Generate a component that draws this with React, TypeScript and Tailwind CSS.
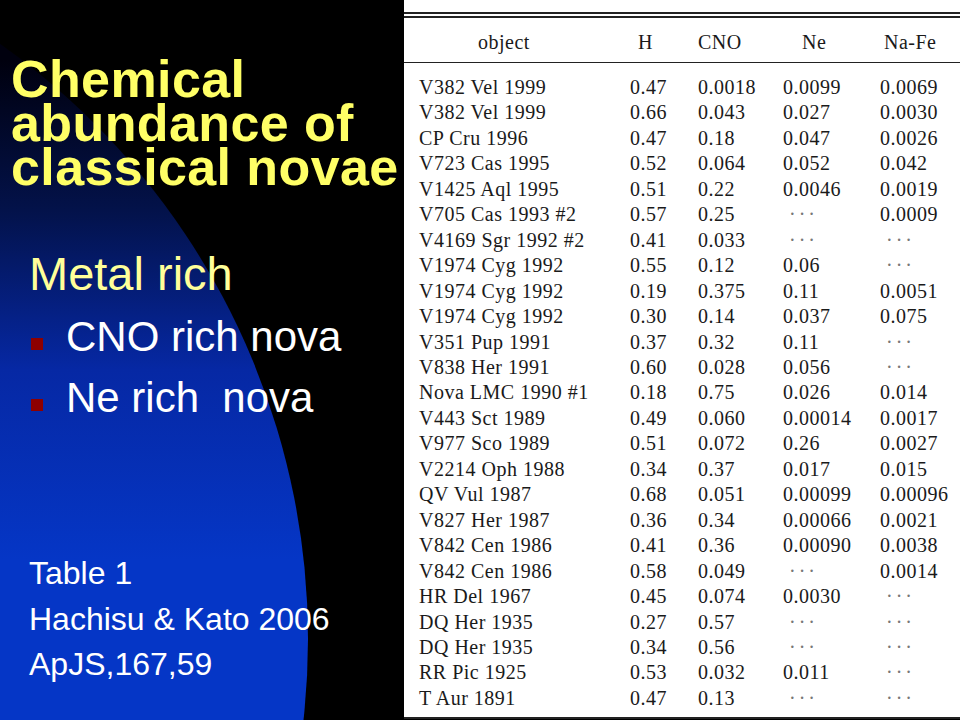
const ROWS: string[][] = [
  ['V382 Vel 1999', '0.47', '0.0018', '0.0099', '0.0069'],
  ['V382 Vel 1999', '0.66', '0.043', '0.027', '0.0030'],
  ['CP Cru 1996', '0.47', '0.18', '0.047', '0.0026'],
  ['V723 Cas 1995', '0.52', '0.064', '0.052', '0.042'],
  ['V1425 Aql 1995', '0.51', '0.22', '0.0046', '0.0019'],
  ['V705 Cas 1993 #2', '0.57', '0.25', '-', '0.0009'],
  ['V4169 Sgr 1992 #2', '0.41', '0.033', '-', '-'],
  ['V1974 Cyg 1992', '0.55', '0.12', '0.06', '-'],
  ['V1974 Cyg 1992', '0.19', '0.375', '0.11', '0.0051'],
  ['V1974 Cyg 1992', '0.30', '0.14', '0.037', '0.075'],
  ['V351 Pup 1991', '0.37', '0.32', '0.11', '-'],
  ['V838 Her 1991', '0.60', '0.028', '0.056', '-'],
  ['Nova LMC 1990 #1', '0.18', '0.75', '0.026', '0.014'],
  ['V443 Sct 1989', '0.49', '0.060', '0.00014', '0.0017'],
  ['V977 Sco 1989', '0.51', '0.072', '0.26', '0.0027'],
  ['V2214 Oph 1988', '0.34', '0.37', '0.017', '0.015'],
  ['QV Vul 1987', '0.68', '0.051', '0.00099', '0.00096'],
  ['V827 Her 1987', '0.36', '0.34', '0.00066', '0.0021'],
  ['V842 Cen 1986', '0.41', '0.36', '0.00090', '0.0038'],
  ['V842 Cen 1986', '0.58', '0.049', '-', '0.0014'],
  ['HR Del 1967', '0.45', '0.074', '0.0030', '-'],
  ['DQ Her 1935', '0.27', '0.57', '-', '-'],
  ['DQ Her 1935', '0.34', '0.56', '-', '-'],
  ['RR Pic 1925', '0.53', '0.032', '0.011', '-'],
  ['T Aur 1891', '0.47', '0.13', '-', '-'],
];

function Cell({ value }: { value: string }) {
  // "-" stands for the LaTeX \cdots in the source table
  if (value === '-')
    return <span className="pl-[6px] tracking-[3px] text-[#777]">···</span>;
  return <span>{value}</span>;
}

function Backdrop() {
  return (
    <svg className="absolute inset-0" width="960" height="720" viewBox="0 0 960 720">
      <defs>
        <linearGradient id="nova" gradientUnits="userSpaceOnUse" x1="0" y1="60" x2="0" y2="560">
          <stop offset="0" stopColor="#00000e" />
          <stop offset="0.3" stopColor="#03124a" />
          <stop offset="0.62" stopColor="#0628a4" />
          <stop offset="1" stopColor="#0536c6" />
        </linearGradient>
      </defs>
      <circle cx="-421" cy="639" r="729" fill="url(#nova)" />
    </svg>
  );
}

export default function App() {
  return (
    <div className="relative flex h-[720px] w-[960px] overflow-hidden bg-black font-['Liberation_Sans',Arial,sans-serif]">
      <Backdrop />

      <div className="relative z-10 flex w-[400px] flex-col">
        <h1 className="pl-[11px] pt-[57px] text-[52px] font-bold leading-[44px] tracking-[0.4px] text-[#ffff66]">
          Chemical
          <br />
          abundance of
          <br />
          classical novae
        </h1>

        <p className="mt-[58px] pl-[29px] text-[47px] leading-[53px] text-[#ffff99]">Metal rich</p>
        <ul className="mt-[6px] pl-[31px] text-[42px] leading-[61px] text-white">
          <li className="flex items-center">
            <span className="mr-[23px] mt-[14px] h-[12px] w-[12px] bg-[#8e0000]" />
            CNO rich nova
          </li>
          <li className="flex items-center whitespace-pre">
            <span className="mr-[23px] mt-[14px] h-[12px] w-[12px] bg-[#8e0000]" />
            Ne rich  nova
          </li>
        </ul>

        <div className="mt-[123px] pl-[29px] text-[32px] leading-[45.5px] text-white">
          <p>Table 1</p>
          <p>Hachisu &amp; Kato 2006</p>
          <p>ApJS,167,59</p>
        </div>
      </div>

      <div className="relative z-10 ml-[4px] flex h-[719px] w-[556px] flex-col bg-white pt-[12px] font-['Liberation_Serif','Times_New_Roman',serif] text-[20px] text-[#1a1a1a]">
        <div className="h-[2px] bg-[#222]" />
        <div className="mt-[2px] h-[1.5px] bg-[#222]" />
        <div className="grid h-[44px] grid-cols-[211px_68px_85px_97px_1fr] items-center pl-[15px] pt-[4px] tracking-[0.5px]">
          <span className="pl-[59px]">object</span>
          <span className="pl-[8px]">H</span>
          <span>CNO</span>
          <span className="pl-[19px]">Ne</span>
          <span className="pl-[4px]">Na-Fe</span>
        </div>
        <div className="h-[1.5px] bg-[#222]" />

        <div className="mt-[12px] flex flex-col tracking-[0.5px]">
          {ROWS.map((row, i) => (
            <div
              key={i}
              className="grid h-[25.46px] grid-cols-[211px_68px_85px_97px_1fr] items-center pl-[15px] leading-[25.46px]"
            >
              {row.map((v, j) => (
                <Cell key={j} value={v} />
              ))}
            </div>
          ))}
        </div>

        <div className="mt-auto h-[2px] bg-[#222]" />
      </div>
    </div>
  );
}
